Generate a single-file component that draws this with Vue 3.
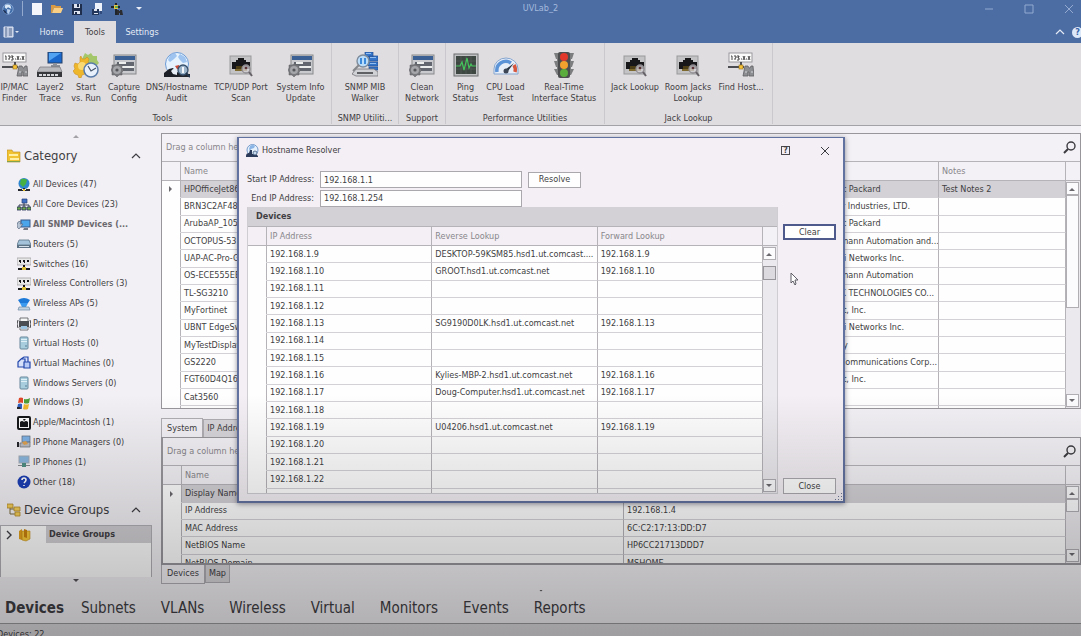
<script setup>
import { ref } from 'vue';

const quickActions = [
  { icon: 'q-new', label: 'New' },
  { icon: 'q-open', label: 'Open' },
  { icon: 'q-save', label: 'Save' },
  { icon: 'q-saveas', label: 'Save as' },
  { icon: 'q-scan', label: 'Scan' },
];

const ribbonTabs = ['Home', 'Tools', 'Settings'];
const activeRibbonTab = ref('Tools');

const ribbonGroups = [
  {
    key: 'tools',
    title: 'Tools',
    items: [
      { icon: 'r-finder', lines: ['IP/MAC', 'Finder'] },
      { icon: 'r-trace', lines: ['Layer2', 'Trace'] },
      { icon: 'r-run', lines: ['Start', 'vs. Run'] },
      { icon: 'r-config', lines: ['Capture', 'Config'] },
      { icon: 'r-dns', lines: ['DNS/Hostname', 'Audit'] },
      { icon: 'r-jack', lines: ['TCP/UDP Port', 'Scan'] },
      { icon: 'r-config', lines: ['System Info', 'Update'] },
    ],
  },
  { key: 'snmp', title: 'SNMP Utiliti...', items: [{ icon: 'r-snmp', lines: ['SNMP MIB', 'Walker'] }] },
  { key: 'support', title: 'Support', items: [{ icon: 'r-config', lines: ['Clean', 'Network'] }] },
  {
    key: 'perf',
    title: 'Performance Utilities',
    items: [
      { icon: 'r-ping', lines: ['Ping', 'Status'] },
      { icon: 'r-cpu', lines: ['CPU Load', 'Test'] },
      { icon: 'r-light', lines: ['Real-Time', 'Interface Status'] },
    ],
  },
  {
    key: 'jack',
    title: 'Jack Lookup',
    items: [
      { icon: 'r-jack', lines: ['Jack Lookup'] },
      { icon: 'r-jack', lines: ['Room Jacks', 'Lookup'] },
      { icon: 'r-finder', lines: ['Find Host...'] },
    ],
  },
];

const categories = [
  { icon: 'c-all', name: 'All Devices (47)' },
  { icon: 'c-core', name: 'All Core Devices (23)' },
  { icon: 'c-snmp', name: 'All SNMP Devices (...', selected: true },
  { icon: 'c-router', name: 'Routers (5)' },
  { icon: 'c-switch', name: 'Switches (16)' },
  { icon: 'c-switch', name: 'Wireless Controllers (3)' },
  { icon: 'c-ap', name: 'Wireless APs (5)' },
  { icon: 'c-printer', name: 'Printers (2)' },
  { icon: 'c-host', name: 'Virtual Hosts (0)' },
  { icon: 'c-vm', name: 'Virtual Machines (0)' },
  { icon: 'c-host', name: 'Windows Servers (0)' },
  { icon: 'c-windows', name: 'Windows (3)' },
  { icon: 'c-apple', name: 'Apple/Macintosh (1)' },
  { icon: 'c-phonemgr', name: 'IP Phone Managers (0)' },
  { icon: 'c-phone', name: 'IP Phones (1)' },
  { icon: 'c-other', name: 'Other (18)' },
];

const devices = [
  { name: 'HPOfficeJet8600', vendor: 'Hewlett Packard', notes: 'Test Notes 2' },
  { name: 'BRN3C2AF4838DD', vendor: 'Brother Industries, LTD.' },
  { name: 'ArubaAP_105', vendor: 'Hewlett Packard' },
  { name: 'OCTOPUS-53', vendor: 'Hirschmann Automation and...' },
  { name: 'UAP-AC-Pro-Gen2', vendor: 'Ubiquiti Networks Inc.' },
  { name: 'OS-ECE555EB', vendor: 'Hirschmann Automation' },
  { name: 'TL-SG3210', vendor: 'TP-LINK TECHNOLOGIES CO...' },
  { name: 'MyFortinet', vendor: 'Fortinet, Inc.' },
  { name: 'UBNT EdgeSwitch', vendor: 'Ubiquiti Networks Inc.' },
  { name: 'MyTestDisplay', vendor: 'Foundry' },
  { name: 'GS2220', vendor: 'Zyxel Communications Corp...' },
  { name: 'FGT60D4Q16', vendor: 'Fortinet, Inc.' },
  { name: 'Cat3560', vendor: 'Cisco' },
  { name: '', vendor: '' },
];

const details = [
  { name: 'Display Name', value: '' },
  { name: 'IP Address', value: '192.168.1.4' },
  { name: 'MAC Address', value: '6C:C2:17:13:DD:D7' },
  { name: 'NetBIOS Name', value: 'HP6CC21713DDD7' },
  { name: 'NetBIOS Domain', value: 'MSHOME' },
];

const startIp = ref('192.168.1.1');
const endIp = ref('192.168.1.254');

const results = ref([
  { ip: '192.168.1.9', reverse: 'DESKTOP-59KSM85.hsd1.ut.comcast....', forward: '192.168.1.9' },
  { ip: '192.168.1.10', reverse: 'GROOT.hsd1.ut.comcast.net', forward: '192.168.1.10' },
  { ip: '192.168.1.11' },
  { ip: '192.168.1.12' },
  { ip: '192.168.1.13', reverse: 'SG9190D0LK.hsd1.ut.comcast.net', forward: '192.168.1.13' },
  { ip: '192.168.1.14' },
  { ip: '192.168.1.15' },
  { ip: '192.168.1.16', reverse: 'Kylies-MBP-2.hsd1.ut.comcast.net', forward: '192.168.1.16' },
  { ip: '192.168.1.17', reverse: 'Doug-Computer.hsd1.ut.comcast.net', forward: '192.168.1.17' },
  { ip: '192.168.1.18' },
  { ip: '192.168.1.19', reverse: 'U04206.hsd1.ut.comcast.net', forward: '192.168.1.19' },
  { ip: '192.168.1.20' },
  { ip: '192.168.1.21' },
  { ip: '192.168.1.22' },
  { ip: '' },
]);

const dialogOpen = ref(true);

const pages = ['Devices', 'Subnets', 'VLANs', 'Wireless', 'Virtual', 'Monitors', 'Events', 'Reports'];
const activePage = ref('Devices');
</script>

<template>
  <div class="app">
    <svg class="sprite" aria-hidden="true">
      <symbol id="q-new" viewBox="0 0 12 12"><path d="M1 0h10v12H1z" fill="#f4f6fb" /></symbol>
      <symbol id="q-open" viewBox="0 0 12 12">
        <path d="M0 2h4l1 1h5v2H3L1 10H0z" fill="#d99a45" />
        <path d="M3 5h9l-2 5H1z" fill="#f9cf86" />
      </symbol>
      <symbol id="q-save" viewBox="0 0 12 12">
        <path d="M1 1h10v11H1z" fill="#1f2e4d" />
        <path d="M3 1h6v4H3zM3 8h6v3H3z" fill="#dfe6f2" />
        <path d="M6 1h2v3H6zM4 9h2v2H4z" fill="#1f2e4d" />
      </symbol>
      <symbol id="q-saveas" viewBox="0 0 12 12">
        <path d="M4 0h7v8H4z" fill="#eef2fa" />
        <path d="M1 6h7v6H1z" fill="#23375d" />
        <path d="M3 6h3v2H3zM3 10h4v1H3z" fill="#dfe6f2" />
        <path d="M9 8h2v3H9z" fill="#2f4a7b" />
      </symbol>
      <symbol id="q-scan" viewBox="0 0 12 12">
        <path d="M4 0h2v12H4zM0 3h9v2H0z" fill="#20252c" />
        <path d="M3 2h4v4H3z" fill="#e8c545" />
        <path d="M4 3h3v2H4z" fill="#62a852" />
        <path d="M6 7h2v1h1V7h2l1 5H9v-2H8v2H6z" fill="#2a2c30" />
      </symbol>
      <symbol id="globe" viewBox="0 0 14 14">
        <circle cx="7.500" cy="6" r="5.500" fill="#e6f1fc" stroke="#5a86c0" stroke-width=".8" />
        <path d="M5 2q3-2 5 0l-1 2-3 1-1 2-1-2z" fill="#8ab4e6" />
        <path d="M1 12q0-3 3-3l1-3 2 0 0 4 4 0 2 2v1H1z" fill="#2b3a58" />
        <circle cx="10" cy="9" r="2" fill="#c8dbee" stroke="#415a7c" stroke-width=".8" />
      </symbol>
      <symbol id="app-logo" viewBox="0 0 14 14">
        <circle cx="7" cy="7" r="6" fill="#3f6ba8" stroke="#8fb0dc" />
        <path d="M4 2q4-1 6 1l1 4-4-2-2 2-2-2z" fill="#dbe8f8" />
        <path d="M6 7l4 1-2 5-2-2z" fill="#b9d0ee" />
        <path d="M1 8l3 1 2 4q-4-1-5-5z" fill="#1d3157" />
      </symbol>
      <symbol id="r-finder" viewBox="0 0 26 26">
        <rect x="1" y="1" width="23" height="9" fill="#fafafa" stroke="#99989b" />
        <path d="M3 4h1v4M6 4h2v2h-1v2M9 4h2v1h-1v1h1v2h-2M13 7h1M15 4l2 4M17 4l-2 4M18 7h1M20 4l2 4M22 4l-2 4" fill="none" stroke="#333" stroke-width=".9" />
        <path d="M0 14h16v2H0zM12 10h2v5h-2z" fill="#4c4d52" />
        <rect x="11" y="13" width="4" height="4" fill="#f3c13a" stroke="#94701b" stroke-width=".6" />
        <path d="M17 14h3l1 2h1l1-2h2l1 10h-5v-4h-1v4h-5z" fill="#8c8e92" stroke="#5f6063" stroke-width=".8" />
        <path d="M17 20h2M23 20h2" stroke="#d5d5d8" />
      </symbol>
      <symbol id="r-trace" viewBox="0 0 26 26">
        <rect x="11" y="0" width="14" height="11" fill="#1a68cb" stroke="#244069" />
        <path d="M12 1h12L12 9z" fill="#52a3f2" />
        <path d="M16 11h4v2h3v2h-9v-2h2z" fill="#8c9098" />
        <path d="M3 15h20l2 5H0z" fill="#b8b9bd" stroke="#737478" stroke-width=".7" />
        <path d="M0 20h25v5H0z" fill="#35373b" />
        <path d="M2 22h3v2H2zM6 22h3v2H6zM10 22h3v2h-3zM14 22h3v2h-3zM18 22h3v2h-3z" fill="#d4d5d8" />
      </symbol>
      <symbol id="r-run" viewBox="0 0 26 26">
        <path d="M12 1l3 2 3-2 2 3 4 0 0 4 2 3-3 3-10-1-4-6z" fill="#a5c76c" />
        <path d="M8 4l1 3h3l2-2 2 2-1 3 2 2 3 1v3l-3 1-1 3 1 2-3 2-2-2-3 1-1 3H6l-1-3-3-1-2-3 2-2-1-3 1-3 3 1 2-2V5z" fill="#eeb72b" stroke="#cd8e22" stroke-width=".6" />
        <circle cx="9" cy="14" r="4" fill="#f9d971" />
        <circle cx="18" cy="18" r="7" fill="#e8f1fb" stroke="#587ba9" stroke-width="1.5" />
        <path d="M15 14l3 5 5-3" fill="none" stroke="#44546b" stroke-width="1.2" />
      </symbol>
      <symbol id="r-config" viewBox="0 0 26 26">
        <rect x="3" y="3" width="22" height="19" fill="#c8cacd" stroke="#88898c" />
        <path d="M4 4h20v4H4z" fill="#3b6094" />
        <path d="M6 10h17v9H6z" fill="#62676f" />
        <path d="M8 10h7v2H8zM11 14h12v2H11z" fill="#eceded" />
        <path d="M6 12l2 1 3 0 0 3 2 2-2 2 0 3-3 0-2 2-2-2-3 0v-3l-1-2 1-2v-3h3z" fill="#77797d" stroke="#5c5d60" stroke-width=".5" />
        <circle cx="6" cy="18" r="4" fill="#a5a6a9" />
        <circle cx="6" cy="18" r="1.600" fill="#56575a" />
      </symbol>
      <symbol id="r-dns" viewBox="0 0 26 26">
        <circle cx="13" cy="12" r="11.500" fill="#e6f2fd" stroke="#6b9bd6" />
        <path d="M6 3l5-2 2 3-3 3-4 3-2-2zM16 2l5 3 2 5-4 1-3-3-2-3z" fill="#86b4ea" opacity=".75" />
        <path d="M0 25v-4l5-4 4-1 2 3 4 2 3 4z" fill="#1c1f26" />
        <path d="M7 19q3-4 6-1l0 5-4-1z" fill="#e8eef5" />
        <path d="M11 14l4-1 1 4-3 0z" fill="#c84b39" />
        <path d="M14 22h12v3H14z" fill="#22252c" />
        <circle cx="19" cy="18" r="5" fill="#9cb4ca" stroke="#37506c" stroke-width="1.300" />
        <path d="M18 15h2v6h-2z" fill="#f4f7fb" />
        <path d="M22 21l4 4" stroke="#24364c" stroke-width="2" />
      </symbol>
      <symbol id="r-jack" viewBox="0 0 26 26">
        <rect x="2" y="4" width="21" height="18" fill="#c3c3c5" stroke="#99999b" />
        <path d="M4 17v-7h4V8h2V6h6v2h2v2h4v7z" fill="#17171a" />
        <path d="M7 17h12v2H7z" fill="#7e6a2e" />
        <path d="M8 14h8v3H8z" fill="#4b3e17" />
        <circle cx="18" cy="17" r="4" fill="#d4d0d4" fill-opacity=".75" stroke="#8f8b90" stroke-width="1.300" />
        <circle cx="18" cy="16" r="1.300" fill="#5a3236" />
        <path d="M21 20l3 4" stroke="#666267" stroke-width="2" />
      </symbol>
      <symbol id="r-snmp" viewBox="0 0 26 26">
        <path d="M13 0h8v5h-8zM17 4h9v5h-9zM16 10h10v4H16zM17 15h9v3h-9z" fill="#3575c9" stroke="#244f91" stroke-width=".7" />
        <path d="M14 1h5v1h-5zM18 5h6v1h-6zM18 11h6v1h-6z" fill="#91bdf0" />
        <path d="M4 17h18l4 3v4H4l-4-2z" fill="#d0d1d4" stroke="#737478" stroke-width=".8" />
        <path d="M5 20h16v2H5z" fill="#5f6064" />
        <circle cx="11" cy="9" r="6" fill="#b9dcfb" stroke="#7e8c9b" stroke-width="1.400" />
        <path d="M8 6h2v6H8zM12 6h2v6h-2z" fill="#3c8ad9" />
        <path d="M7 13l-6 6" stroke="#85878b" stroke-width="2" />
      </symbol>
      <symbol id="r-ping" viewBox="0 0 26 26">
        <rect x="1" y="2" width="24" height="22" fill="#c0c1c3" stroke="#6d6e70" />
        <rect x="3" y="4" width="20" height="18" fill="#3f4743" />
        <path d="M3 9h20M3 13h20M3 17h20M8 4v18M13 4v18M18 4v18" stroke="#59615d" stroke-width=".6" />
        <path d="M3 14h4l2-4 2 8 3-12 2 10 2-4 1 2h4" fill="none" stroke="#45c65c" stroke-width="1.200" />
      </symbol>
      <symbol id="r-cpu" viewBox="0 0 26 26">
        <path d="M1 22v-5a12 11 0 0 1 24 0v5z" fill="#e9eff8" stroke="#85a5ce" />
        <path d="M4 20a9 9 0 0 1 14-9" fill="none" stroke="#5d94d8" stroke-width="3.500" />
        <path d="M21 13a9 9 0 0 1 1 7" fill="none" stroke="#d7573e" stroke-width="3.500" />
        <path d="M12 18l9-7-6 8z" fill="#2c3542" />
        <circle cx="13" cy="19" r="2.500" fill="#3c4654" />
      </symbol>
      <symbol id="r-light" viewBox="0 0 26 26">
        <path d="M3 1h20l-2 6h-1v2h3l-2 6h-1v2h3l-3 6H6l-3-6h3v-2H5L3 9h3V7H5z" fill="#7c7d7f" />
        <rect x="7" y="0" width="12" height="26" rx="2" fill="#4c4d4f" />
        <circle cx="13" cy="5" r="4" fill="#e2382c" />
        <circle cx="13" cy="13" r="4" fill="#f2a02e" />
        <circle cx="13" cy="21" r="4" fill="#5aad3c" />
      </symbol>
      <symbol id="c-folder" viewBox="0 0 14 14">
        <path d="M0 1h5l1 2h7v10H0z" fill="#f1c232" stroke="#b98b1f" stroke-width=".6" />
        <path d="M2 5h9v2H2zM3 9h9v2H3z" fill="#fff0a6" />
        <path d="M0 12h13v1H0z" fill="#82a24b" />
      </symbol>
      <symbol id="c-tree" viewBox="0 0 14 14">
        <path d="M3 5v6h5M3 6h5" fill="none" stroke="#7b6a3c" />
        <path d="M0 1h6v4H0zM7 4h6v4H7zM8 9h5v4H8z" fill="#f4cd58" stroke="#b28a2d" stroke-width=".8" />
      </symbol>
      <symbol id="c-group" viewBox="0 0 14 14">
        <path d="M1 3l3-2v11l-3-1z" fill="#e2a01c" />
        <path d="M4 3h8v8l-4 2-4-1z" fill="#f7c83a" stroke="#c18b18" stroke-width=".6" />
        <path d="M6 1l3 1v8l-3-1zM10 4l1 5" fill="#c9810f" />
      </symbol>
      <symbol id="c-all" viewBox="0 0 14 14">
        <circle cx="7" cy="5.500" r="5.500" fill="#2f86cf" />
        <path d="M4 1q4-1 6 1L9 6 6 9 3 6z" fill="#46b045" />
        <path d="M6 10h2v2H6zM1 11h4v2H1zM9 11h4v2H9zM1 12h12v1H1z" fill="#25282f" />
        <path d="M6 11h2v2H6z" fill="#e4c02e" />
      </symbol>
      <symbol id="c-core" viewBox="0 0 14 14">
        <path d="M5 1h5v4H5z" fill="#4171c4" stroke="#263f78" stroke-width=".7" />
        <path d="M7 5v4M2 9V7h10v2" fill="none" stroke="#333a55" />
        <path d="M0 9h4v3H0zM5 9h4v3H5zM10 9h4v3h-4z" fill="#6faa4b" stroke="#27315c" stroke-width=".8" />
      </symbol>
      <symbol id="c-snmp" viewBox="0 0 14 14">
        <rect x="4" y="2" width="9" height="7" fill="#4aa5ea" stroke="#39598a" />
        <path d="M7 10h4v2H6z" fill="#737984" />
        <path d="M0 7q0-4 4-4l-1 3h3l-4 5q-2-1-2-4z" fill="#b7c4d4" stroke="#5b6b82" stroke-width=".7" />
      </symbol>
      <symbol id="c-router" viewBox="0 0 14 14">
        <path d="M2 3h10l2 5H0z" fill="#a4c3da" stroke="#5b7185" stroke-width=".8" />
        <path d="M0 8h14v3H0z" fill="#5d7284" />
        <path d="M2 9h10v1H2z" fill="#d4e1eb" />
      </symbol>
      <symbol id="c-switch" viewBox="0 0 14 14">
        <rect x="0" y="1" width="14" height="7" fill="#e8e8e8" stroke="#8a8a8c" stroke-width=".6" />
        <path d="M2 3h2v2H2zM6 3h2v2H6zM10 3h2v2h-2zM3 5h1v1H3zM7 5h1v1H7zM6 8h2v3H6z" fill="#17171a" />
        <path d="M1 11h12v2H1z" fill="#1c1d20" />
        <path d="M5 10h4v3H5z" fill="#dcbf3a" />
      </symbol>
      <symbol id="c-ap" viewBox="0 0 14 14">
        <path d="M1 3q6-4 12 0l-2 3H3z" fill="#1d79d8" />
        <path d="M3 6h8l-2 4H5z" fill="#3a9bf0" />
        <path d="M2 10h10l1 3H1z" fill="#c2d4e2" stroke="#6d8aa4" stroke-width=".7" />
      </symbol>
      <symbol id="c-printer" viewBox="0 0 14 14">
        <path d="M3 1h8v12H3z" fill="#f7f7f7" stroke="#54565a" stroke-width=".8" />
        <path d="M2 4h10v6H2z" fill="#4a4d52" />
        <path d="M4 9h6v3H4z" fill="#9cc4e3" />
        <path d="M1 3q-2 4 0 8M13 3q2 4 0 8" fill="none" stroke="#3f4145" />
      </symbol>
      <symbol id="c-host" viewBox="0 0 14 14">
        <rect x="3" y="1" width="8" height="12" rx="1" fill="#a8cede" stroke="#67879a" />
        <path d="M4 3h6v1H4zM4 5h6v1H4z" fill="#dff0f7" />
        <path d="M8 9h2v2H8z" fill="#7fa5b8" />
      </symbol>
      <symbol id="c-vm" viewBox="0 0 14 14">
        <path d="M4 3l3-2h4v5M1 6l3-3h4v8H1z" fill="#d7e2fa" stroke="#2346ab" stroke-width="1.200" />
        <path d="M7 6h6v6H7z" fill="#b7caf5" stroke="#2346ab" stroke-width="1.200" />
      </symbol>
      <symbol id="c-windows" viewBox="0 0 14 14">
        <path d="M2 2q2-1 4 0v5q-2-1-5 0z" fill="#e0472b" />
        <path d="M7 3q3 1 6-1l-1 5q-3 1-5 0z" fill="#4c9e38" />
        <path d="M1 8q2-1 4 0v5q-2-1-5 0z" fill="#315fc0" />
        <path d="M7 8q2 1 5 0l-1 5q-3 1-5 0z" fill="#efb62b" />
        <path d="M0 11l3 0 1 2H0z" fill="#26272c" />
      </symbol>
      <symbol id="c-apple" viewBox="0 0 14 14">
        <rect x="1" y="1" width="12" height="12" rx="1" fill="#fafafa" stroke="#17181a" stroke-width="2" />
        <path d="M3 6q2-2 4 0 2-2 4 0v5H3zM6 3h3L7 5z" fill="#17181a" />
      </symbol>
      <symbol id="c-phonemgr" viewBox="0 0 14 14">
        <rect x="5" y="1" width="8" height="6" fill="#7fb1e6" stroke="#5f6a7a" stroke-width=".7" />
        <path d="M0 7h2v5H0z" fill="#25262a" />
        <path d="M3 8l10-1v5H3z" fill="#b9bcc2" stroke="#666b73" stroke-width=".7" />
        <path d="M5 7l4-1 2 3-4 1z" fill="#dda04e" />
      </symbol>
      <symbol id="c-phone" viewBox="0 0 14 14">
        <rect x="2" y="1" width="10" height="7" fill="#8ab6de" stroke="#a4acb6" />
        <path d="M1 10h12v1H1z" fill="#85898f" />
        <path d="M5 8h4v4H5z" fill="#4f8f84" />
      </symbol>
      <symbol id="c-other" viewBox="0 0 14 14">
        <circle cx="7" cy="7" r="6.500" fill="#1d3fb4" />
        <path d="M5 5q0-2 2-2t2 2q0 1-2 3M7 10v1" fill="none" stroke="#fff" stroke-width="1.600" />
      </symbol>
      <symbol id="chevron-up" viewBox="0 0 10 10"><path d="M1 7l4-4 4 4" fill="none" stroke="currentColor" stroke-width="1.200" /></symbol>
      <symbol id="chevron-right" viewBox="0 0 10 10"><path d="M3 1l4 4-4 4" fill="none" stroke="currentColor" stroke-width="1.400" /></symbol>
      <symbol id="tri-up" viewBox="0 0 8 8"><path d="M1 6l3-3 3 3z" fill="currentColor" /></symbol>
      <symbol id="tri-down" viewBox="0 0 8 8"><path d="M1 2l3 3 3-3z" fill="currentColor" /></symbol>
      <symbol id="tri-right" viewBox="0 0 8 8"><path d="M2 1l3 3-3 3z" fill="currentColor" /></symbol>
      <symbol id="search" viewBox="0 0 14 14">
        <circle cx="8" cy="5" r="4" fill="none" stroke="#3c3b3f" stroke-width="1.400" />
        <path d="M5 8l-4 4" stroke="#3c3b3f" stroke-width="2" />
      </symbol>
    </svg>

    <header class="titlebar">
      <div class="quick">
        <svg class="quick-icon"><use href="#app-logo" /></svg>
        <span class="quick-sep"></span>
        <button v-for="action in quickActions" :key="action.icon" :aria-label="action.label">
          <svg class="quick-icon"><use :href="'#' + action.icon" /></svg>
        </button>
        <button class="quick-more" aria-label="Customize"><svg class="tri"><use href="#tri-down" /></svg></button>
      </div>
      <span class="window-title">UVLab_2</span>
      <div class="window-buttons">
        <button aria-label="Minimize"><svg viewBox="0 0 10 10"><path d="M1 5h8" /></svg></button>
        <button aria-label="Maximize"><svg viewBox="0 0 10 10"><path d="M1 1h8v8H1z" /></svg></button>
        <button aria-label="Close window"><svg viewBox="0 0 10 10"><path d="M1 1l8 8M9 1L1 9" /></svg></button>
      </div>
    </header>

    <nav class="tabs">
      <button class="file-menu" aria-label="Application menu">
        <svg viewBox="0 0 18 12">
          <path d="M1 1h9v10H1z" fill="#b9c6de" stroke="#dfe6f2" />
          <path d="M3 1v10M6 3h3M6 5h3M6 7h3M6 9h3" stroke="#5d7196" />
          <path d="M12 5h4l-2 2z" fill="#dfe6f2" />
        </svg>
      </button>
      <button
        v-for="tab in ribbonTabs"
        :key="tab"
        class="tab"
        :class="{ active: tab === activeRibbonTab }"
        @click="activeRibbonTab = tab"
      >
        {{ tab }}
      </button>
      <div class="tabs-right">
        <button aria-label="Collapse ribbon"><svg class="chevron"><use href="#chevron-up" /></svg></button>
        <button class="help" aria-label="Help">?</button>
      </div>
    </nav>

    <section class="ribbon">
      <div v-for="group in ribbonGroups" :key="group.key" class="group" :class="group.key">
        <div class="group-items">
          <button v-for="item in group.items" :key="item.lines[0]" class="tool">
            <svg class="tool-icon"><use :href="'#' + item.icon" /></svg>
            <span v-for="line in item.lines" :key="line">{{ line }}</span>
          </button>
        </div>
        <div class="group-title">{{ group.title }}</div>
      </div>
    </section>

    <div class="body">
      <aside class="sidebar">
        <svg class="tri scroll-up"><use href="#tri-up" /></svg>
        <h2>
          <svg class="small-icon"><use href="#c-folder" /></svg>
          Category
          <svg class="chevron"><use href="#chevron-up" /></svg>
        </h2>
        <ul class="categories">
          <li v-for="item in categories" :key="item.name" :class="{ selected: item.selected }">
            <svg class="small-icon"><use :href="'#' + item.icon" /></svg>
            {{ item.name }}
          </li>
        </ul>
        <h2>
          <svg class="small-icon"><use href="#c-tree" /></svg>
          Device Groups
          <svg class="chevron"><use href="#chevron-up" /></svg>
        </h2>
        <div class="tree">
          <div class="tree-row">
            <svg class="chevron"><use href="#chevron-right" /></svg>
            <svg class="small-icon"><use href="#c-group" /></svg>
            <span>Device Groups</span>
          </div>
        </div>
        <svg class="tri scroll-down"><use href="#tri-down" /></svg>
      </aside>

      <main class="main">
        <section class="panel">
          <div class="group-by">
            <span>Drag a column header here to group by that column</span>
            <svg class="search"><use href="#search" /></svg>
          </div>
          <div class="grid">
            <table class="devices">
              <colgroup><col class="mark" /><col class="name" /><col class="vendor" /><col class="notes" /></colgroup>
              <thead>
                <tr><th></th><th>Name</th><th>Vendor</th><th>Notes</th></tr>
              </thead>
              <tbody>
                <tr v-for="(row, index) in devices" :key="index" :class="{ selected: index === 0 }">
                  <td><svg v-if="index === 0" class="tri"><use href="#tri-right" /></svg></td>
                  <td>{{ row.name }}</td>
                  <td>{{ row.vendor }}</td>
                  <td>{{ row.notes }}</td>
                </tr>
              </tbody>
            </table>
            <div class="scroll">
              <div class="scroll-head"></div>
              <button aria-label="Scroll up"><svg class="tri"><use href="#tri-up" /></svg></button>
              <div class="thumb long"></div>
              <button class="down" aria-label="Scroll down"><svg class="tri"><use href="#tri-down" /></svg></button>
            </div>
          </div>
        </section>

        <div class="sub-tabs top">
          <button class="active">System</button>
          <button>IP Addresses</button>
        </div>

        <section class="panel lower">
          <div class="group-by">
            <span>Drag a column header here to group by that column</span>
            <svg class="search"><use href="#search" /></svg>
          </div>
          <div class="grid">
            <table class="details">
              <colgroup><col class="mark" /><col /><col /></colgroup>
              <thead>
                <tr><th></th><th>Name</th><th>Value</th></tr>
              </thead>
              <tbody>
                <tr v-for="(row, index) in details" :key="row.name" :class="{ selected: index === 0 }">
                  <td><svg v-if="index === 0" class="tri"><use href="#tri-right" /></svg></td>
                  <td>{{ row.name }}</td>
                  <td>{{ row.value }}</td>
                </tr>
              </tbody>
            </table>
            <div class="scroll">
              <div class="scroll-head"></div>
              <button aria-label="Scroll up"><svg class="tri"><use href="#tri-up" /></svg></button>
              <div class="thumb"></div>
              <button class="down" aria-label="Scroll down"><svg class="tri"><use href="#tri-down" /></svg></button>
            </div>
          </div>
        </section>

        <div class="sub-tabs bottom">
          <button class="active">Devices</button>
          <button>Map</button>
        </div>
      </main>
    </div>

    <svg class="tri splitter"><use href="#tri-down" /></svg>
    <nav class="pages">
      <button
        v-for="page in pages"
        :key="page"
        :class="{ active: page === activePage }"
        @click="activePage = page"
      >
        {{ page }}
      </button>
    </nav>
    <footer class="status">Devices: 22</footer>

    <div v-if="dialogOpen" class="dialog" role="dialog" aria-labelledby="dialog-title">
      <div class="dialog-title">
        <svg class="small-icon"><use href="#globe" /></svg>
        <span id="dialog-title">Hostname Resolver</span>
        <button class="dialog-help" aria-label="Help">?</button>
        <button class="dialog-close" aria-label="Close dialog" @click="dialogOpen = false">
          <svg viewBox="0 0 10 10"><path d="M1 1l8 8M9 1L1 9" /></svg>
        </button>
      </div>
      <form class="range" @submit.prevent>
        <label for="start-ip">Start IP Address:</label>
        <input id="start-ip" v-model="startIp" type="text" />
        <button class="btn" type="submit">Resolve</button>
        <label for="end-ip">End IP Address:</label>
        <input id="end-ip" v-model="endIp" type="text" />
      </form>
      <div class="dialog-body">
        <div class="results">
          <h3>Devices</h3>
          <div class="grid">
            <table class="lookup">
              <colgroup><col class="mark" /><col /><col /><col /></colgroup>
              <thead>
                <tr><th></th><th>IP Address</th><th>Reverse Lookup</th><th>Forward Lookup</th></tr>
              </thead>
              <tbody>
                <tr v-for="row in results" :key="row.ip">
                  <td></td>
                  <td>{{ row.ip }}</td>
                  <td>{{ row.reverse }}</td>
                  <td>{{ row.forward }}</td>
                </tr>
              </tbody>
            </table>
            <div class="scroll">
              <div class="scroll-head"></div>
              <button aria-label="Scroll up"><svg class="tri"><use href="#tri-up" /></svg></button>
              <div class="thumb apart"></div>
              <button class="down" aria-label="Scroll down"><svg class="tri"><use href="#tri-down" /></svg></button>
            </div>
          </div>
        </div>
        <div class="dialog-actions">
          <button class="btn focused" @click="results = []">Clear</button>
          <button class="btn" @click="dialogOpen = false">Close</button>
        </div>
      </div>
      <svg class="grip" viewBox="0 0 8 8">
        <path d="M6 0h1v1H6zM3 3h1v1H3zM6 3h1v1H6zM0 6h1v1H0zM3 6h1v1H3zM6 6h1v1H6z" fill="#6d7796" />
      </svg>
    </div>

    <svg class="pointer" viewBox="0 0 10 14">
      <path d="M1 1v10l2-2 2 4 1-1-1-4h3z" fill="#fff" stroke="#5f5e66" />
    </svg>
    <div class="shade"></div>
  </div>
</template>

<style>
body {
  background: #f2f0f4;
}
</style>

<style scoped>
.app {
  position: relative;
  display: flex;
  flex-direction: column;
  height: 100vh;
  overflow: hidden;
  font-family: 'DejaVu Sans Condensed', 'Roboto', sans-serif;
  font-size: 9px;
  line-height: 11px;
  color: #3f3e43;
  background: #f2f0f4;
}
.sprite {
  position: absolute;
  width: 0;
  height: 0;
}
button {
  margin: 0;
  padding: 0;
  border: none;
  background: none;
  font: inherit;
  color: inherit;
  white-space: nowrap;
}
svg {
  display: block;
  flex: none;
}
.small-icon {
  width: 14px;
  height: 14px;
}
.chevron {
  width: 10px;
  height: 10px;
}
.tri {
  width: 8px;
  height: 8px;
  color: #6b696e;
}

/* title bar and ribbon tabs */
.titlebar {
  display: grid;
  grid-template-columns: 1fr auto 1fr;
  align-items: center;
  flex: none;
  height: 17px;
  padding-bottom: 4px;
  background: #4b6da4;
}
.quick {
  display: flex;
  align-items: center;
  gap: 8px;
  padding-left: 2px;
}
.quick-icon {
  width: 12px;
  height: 12px;
}
.quick-sep {
  width: 1px;
  height: 15px;
  background: #93a9cd;
}
.quick-more {
  margin-left: 4px;
}
.quick-more .tri {
  color: #e9eef7;
}
.window-title {
  color: #a5b9dc;
}
.window-buttons {
  display: flex;
  justify-content: flex-end;
  gap: 30px;
  padding-right: 7px;
}
.window-buttons svg {
  width: 10px;
  height: 10px;
  fill: none;
  stroke: #94aad0;
}
.tabs {
  display: flex;
  align-items: stretch;
  flex: none;
  height: 22px;
  background: #4b6da4;
  color: #e6ebf5;
}
.file-menu {
  width: 29px;
  padding-left: 3px;
}
.file-menu svg {
  width: 18px;
  height: 12px;
}
.tab {
  width: 45px;
}
.tab.active {
  width: 42px;
  color: #3f3e43;
  background: #dfdde0;
}
.tab:last-of-type {
  width: 52px;
}
.tabs-right {
  display: flex;
  align-items: center;
  gap: 7px;
  margin-left: auto;
  margin-right: -2px;
}
.help {
  width: 11px;
  height: 11px;
  border-radius: 50%;
  background: #dde8f8;
  color: #3763a8;
  font-weight: bold;
}

/* ribbon */
.ribbon {
  display: flex;
  flex: none;
  height: 82px;
  border-bottom: 1px solid #a3a2a6;
  background: #dfdde0;
}
.group {
  display: flex;
  flex-direction: column;
  justify-content: space-between;
  height: 81px;
  padding-top: 9px;
  box-sizing: border-box;
  border-right: 1px solid #cac8cc;
}
.group-items {
  display: grid;
  justify-content: center;
}
.group.tools .group-items {
  grid-template-columns: 29px 42px 30px 46px 59px 70px 49px;
  padding-right: 6px;
}
.group.snmp .group-items {
  grid-template-columns: 66px;
}
.group.support .group-items {
  grid-template-columns: 46px;
}
.group.perf .group-items {
  grid-template-columns: 39px 41px 76px;
  padding-right: 2px;
}
.group.jack .group-items {
  grid-template-columns: 54px 52px 54px;
  padding: 0 4px 0 3px;
}
.tool {
  display: flex;
  flex-direction: column;
  align-items: center;
  min-width: 0;
}
.tool-icon {
  width: 26px;
  height: 26px;
  margin-bottom: 4px;
}
.group-title {
  text-align: center;
}
.tools .group-title {
  padding-right: 6px;
}

/* body */
.body {
  display: flex;
  flex: 1;
  min-height: 0;
}
.sidebar {
  display: flex;
  flex-direction: column;
  width: 152px;
  margin-right: 9px;
}
.scroll-up,
.scroll-down {
  align-self: center;
}
.scroll-up {
  margin-top: 6px;
  color: #a3a1a6;
}
.scroll-down {
  margin-bottom: 4px;
  color: #555358;
}
h2 {
  display: flex;
  align-items: center;
  gap: 3px;
  flex: none;
  height: 31px;
  margin: 0;
  padding: 0 11px 0 7px;
  font-size: 13px;
  line-height: 16px;
  font-weight: normal;
}
h2 .chevron {
  margin-left: auto;
}
.categories {
  display: grid;
  flex: none;
  grid-template-rows: repeat(16, 1fr);
  height: 317px;
  margin: 4px 0 2px;
  padding: 0;
  list-style: none;
}
.categories li {
  display: flex;
  align-items: center;
  gap: 2px;
  padding-left: 17px;
  white-space: nowrap;
}
.categories .selected {
  font-weight: bold;
  color: #6a686e;
}
.tree {
  flex: 1;
  border: 1px solid #b1afb4;
  border-bottom: none;
  background: #fdfdfe;
}
.tree-row {
  display: flex;
  align-items: center;
  gap: 4px;
  height: 17px;
  padding-left: 3px;
}
.tree-row span {
  flex: 1;
  margin-left: 10px;
  padding-left: 3px;
  line-height: 17px;
  font-weight: bold;
  background: #d0ced2;
}

.main {
  display: grid;
  flex: 1;
  grid-template-rows: minmax(0, 277fr) 28px minmax(0, 128fr) 19px;
  min-width: 0;
  padding: 7px 0 5px;
}
.panel {
  display: flex;
  flex-direction: column;
  min-height: 0;
  box-sizing: border-box;
  border: 1px solid #98969b;
  background: #f3f1f5;
}
.panel.lower {
  border-width: 1px 1px 2px 2px;
}
.group-by {
  display: flex;
  align-items: center;
  justify-content: space-between;
  flex: none;
  height: 27px;
  padding: 0 3px 0 4px;
  color: #88868b;
}
.search {
  width: 14px;
  height: 14px;
}
.grid {
  display: flex;
  flex: 1;
  min-height: 0;
  overflow: hidden;
  border-top: 1px solid #b5b3b8;
}
table {
  flex: 1;
  width: 100%;
  table-layout: fixed;
  border-collapse: separate;
  border-spacing: 0;
}
th,
td {
  padding: 0 0 0 3px;
  box-sizing: border-box;
  border-right: 1px solid #b5b3b8;
  text-align: left;
  white-space: nowrap;
  overflow: hidden;
  line-height: 11px;
}
th {
  height: 19px;
  border-bottom: 1px solid #b5b3b8;
  color: #88868b;
  font-weight: normal;
}
td {
  height: 17px;
  border-bottom: 1px solid #d3d1d6;
  background: #fefefe;
}
td:first-child {
  padding: 0 5px;
  border-bottom-color: transparent;
}
.selected td {
  background: #d3d1d5;
}
.selected td:first-child {
  background: #fefefe;
}
.mark {
  width: 19px;
}
.devices {
  height: 262px;
}
.vendor {
  width: 127px;
}
.notes {
  width: 127px;
}
.details {
  height: 106px;
}
.scroll {
  display: flex;
  flex-direction: column;
  width: 14px;
  padding-bottom: 1px;
  box-sizing: border-box;
  background: #ebe9ed;
}
.scroll-head {
  flex: none;
  height: 19px;
  margin-bottom: 1px;
  box-sizing: border-box;
  border-bottom: 1px solid #b5b3b8;
  background: #f3f1f5;
}
.scroll button,
.thumb {
  flex: none;
  width: 13px;
  height: 13px;
  box-sizing: border-box;
  border: 1px solid #b0aeb3;
  background: #fbfafc;
}
.scroll button {
  padding-left: 1px;
}
.scroll .down {
  margin-top: auto;
}
.thumb.long {
  height: 113px;
}
.thumb.apart {
  height: 14px;
  margin-top: 6px;
  border-color: #98969b;
  background: #dcdadf;
}
.sub-tabs {
  display: flex;
}
.sub-tabs.top {
  align-items: flex-end;
}
.sub-tabs button {
  height: 18px;
  padding: 0 3px;
  box-sizing: border-box;
  border: 1px solid #b0aeb3;
  background: #d7d5d9;
}
.sub-tabs .active {
  height: 19px;
  padding: 0 5px;
  background: #f3f1f5;
}
.sub-tabs.top button {
  border-bottom: none;
}
.sub-tabs.bottom button {
  border-top: none;
}

/* bottom navigation */
.splitter {
  align-self: center;
  height: 4px;
  color: #555358;
}
.pages {
  display: flex;
  align-items: center;
  gap: 25px;
  flex: none;
  height: 30px;
  padding-left: 5px;
  font-size: 15px;
  line-height: 18px;
}
.pages .active {
  font-weight: bold;
  margin-right: -8px;
}
.status {
  flex: none;
  height: 12px;
  border-top: 1px solid #9b999e;
  background: #dcdadd;
  line-height: 20px;
  text-indent: -3px;
  overflow: hidden;
}

/* hostname resolver */
.dialog {
  position: absolute;
  top: 137px;
  left: 237px;
  width: 608px;
  box-sizing: border-box;
  padding: 0 7px 7px 8px;
  border: 2px solid #6272a0;
  border-top-width: 1px;
  background: #f3eff4;
  box-shadow: 0 1px 5px rgba(40, 40, 60, 0.5);
}
.dialog-title {
  display: flex;
  align-items: center;
  height: 25px;
  margin-bottom: 8px;
}
.dialog-title .small-icon {
  margin: 0 3px 0 -2px;
}
.dialog-help {
  width: 9px;
  height: 9px;
  margin: 0 30px 0 auto;
  border: 1px solid #4a494e;
  box-sizing: border-box;
  font-size: 8px;
  line-height: 7px;
  font-weight: bold;
}
.dialog-close {
  margin-right: 6px;
}
.dialog-close svg {
  width: 10px;
  height: 10px;
  fill: none;
  stroke: #3c3b3f;
}
.range {
  display: grid;
  grid-template-columns: 67px 202px 53px;
  align-items: center;
  column-gap: 6px;
  row-gap: 1px;
  height: 36px;
}
.range label {
  text-align: right;
  white-space: nowrap;
}
.range input {
  min-width: 0;
  height: 17px;
  padding: 0 3px;
  box-sizing: border-box;
  border: 1px solid #aaa8ad;
  background: #fefefe;
  font: inherit;
  color: inherit;
}
.btn {
  height: 16px;
  box-sizing: border-box;
  border: 1px solid #aaa8ad;
  background: #fefefe;
}
.btn.focused {
  border: 2px solid #4f5a8c;
}
.dialog-body {
  display: flex;
  gap: 5px;
}
.results {
  display: flex;
  flex: 1;
  flex-direction: column;
  height: 287px;
  box-sizing: border-box;
  border: 1px solid #cfcdd2;
  border-top: none;
}
h3 {
  margin: 0;
  padding-left: 8px;
  font-size: 9px;
  line-height: 19px;
  background: #d3d1d5;
}
.lookup {
  height: 279px;
}
.dialog-actions {
  display: flex;
  flex-direction: column;
  justify-content: space-between;
  width: 53px;
  padding-top: 17px;
}
.grip {
  position: absolute;
  right: 0;
  bottom: 0;
  width: 8px;
  height: 8px;
}
.pointer {
  position: absolute;
  top: 272px;
  left: 790px;
  width: 10px;
  height: 14px;
}
/* the desktop dims towards its lower edge */
.shade {
  position: absolute;
  inset: 62% 0 0;
  background: linear-gradient(rgba(0, 0, 0, 0), rgba(0, 0, 0, 0.28));
  pointer-events: none;
}
</style>
